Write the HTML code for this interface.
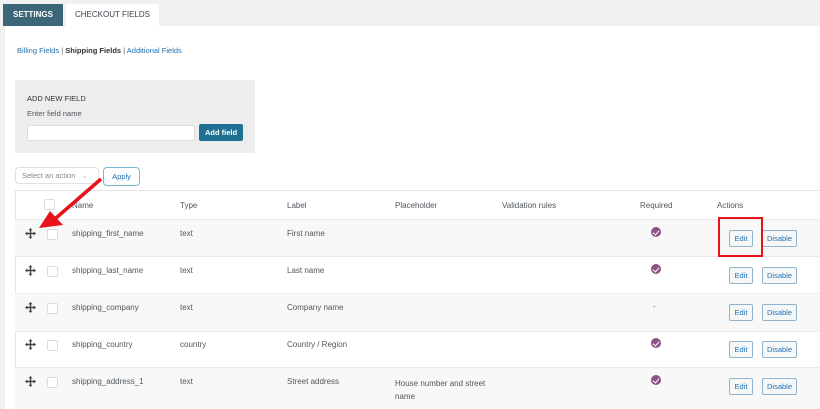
<!DOCTYPE html>
<html><head><style>
*{margin:0;padding:0;box-sizing:border-box}
body{width:820px;height:409px;overflow:hidden;background:#f1f1f1;font-family:"Liberation Sans",sans-serif;position:relative;color:#3c434a}
.a{position:absolute}
.t{font-size:8px;color:#50575e}
.row{position:absolute;left:15px;width:805px;border-top:1px solid #ececec}
.s{background:#f8f8f8}
.cb{position:absolute;width:11px;height:11px;border:1px solid #dcdcdc;border-radius:2px;background:#fff}
.btn{position:absolute;height:17px;border:1px solid #8fb3cf;border-radius:2px;background:#f6f7f7;color:#2271b1;font-size:7.5px;text-align:center;line-height:15px}
.chk{position:absolute;width:10px;height:10px;border-radius:50%;background:#8c5383}
.chk:after{content:"";position:absolute;left:3px;top:2px;width:3px;height:5px;border:solid #fff;border-width:0 1.5px 1.5px 0;transform:rotate(40deg)}
.mv{position:absolute;width:11px;height:11px}
</style></head><body>
<svg width="0" height="0" style="position:absolute"><defs><symbol id="mv" viewBox="0 0 11 11"><path d="M5.5 1.5V9.5M1.5 5.5H9.5" stroke="#3c434a" stroke-width="1.4"/><path d="M5.5 0L3.5 2.3H7.5ZM5.5 11L3.5 8.7H7.5ZM0 5.5L2.3 3.5V7.5ZM11 5.5L8.7 3.5V7.5Z" fill="#3c434a"/></symbol></defs></svg>
<div class="a" style="left:3px;top:4px;width:60px;height:22px;background:#3b6778;color:#fff;font-size:8px;font-weight:bold;line-height:22px;text-align:center">SETTINGS</div>
<div class="a" style="left:66px;top:4px;width:93px;height:22px;background:#fff;color:#3c434a;font-size:8px;line-height:22px;text-align:center">CHECKOUT FIELDS</div>
<div class="a" style="left:5px;top:26px;width:815px;height:383px;background:#fff"></div>
<div class="a t" style="left:17px;top:46px;font-size:7.5px"><span style="color:#2271b1">Billing Fields</span> | <b style="color:#333;font-weight:600">Shipping Fields</b> | <span style="color:#2271b1">Additional Fields</span></div>
<div class="a" style="left:15px;top:80px;width:240px;height:73px;background:#ededed"></div>
<div class="a" style="left:27px;top:94px;font-size:7.5px;color:#333">ADD NEW FIELD</div>
<div class="a" style="left:27px;top:109px;font-size:7.5px;color:#50575e">Enter field name</div>
<div class="a" style="left:27px;top:125px;width:168px;height:16px;background:#fff;border:1px solid #ddd;border-radius:2px"></div>
<div class="a" style="left:199px;top:124px;width:44px;height:17px;background:#1f7194;color:#fff;font-size:7.5px;font-weight:bold;line-height:17px;text-align:center;border-radius:2px">Add field</div>
<div class="a" style="left:15px;top:167px;width:84px;height:17px;border:1px solid #e0e0e0;border-radius:4px;background:#fff;font-size:7.5px;color:#888;line-height:15px;padding-left:6px">Select an action <span style="color:#bbb;margin-left:4px">⌄</span></div>
<div class="a" style="left:103px;top:167px;width:37px;height:19px;border:1px solid #78b9d4;border-radius:4px;background:#fff;font-size:7.5px;color:#2271b1;line-height:17px;text-align:center">Apply</div>
<div class="a" style="left:15px;top:190px;width:805px;height:219px;border-left:1px solid #e5e5e5;border-top:1px solid #e5e5e5"></div>
<div class="cb" style="left:44px;top:199px"></div>
<div class="a t" style="left:72px;top:201px">Name</div>
<div class="a t" style="left:180px;top:201px">Type</div>
<div class="a t" style="left:287px;top:201px">Label</div>
<div class="a t" style="left:395px;top:201px">Placeholder</div>
<div class="a t" style="left:502px;top:201px">Validation rules</div>
<div class="a t" style="left:640px;top:201px">Required</div>
<div class="a t" style="left:717px;top:201px">Actions</div>

<div class="row s" style="top:219px;height:37px"></div>
<div class="row" style="top:256px;height:37px"></div>
<div class="row s" style="top:293px;height:38px"></div>
<div class="row" style="top:331px;height:36px"></div>
<div class="row s" style="top:367px;height:42px"></div>

<svg class="mv" style="left:25px;top:228px"><use href="#mv"/></svg><div class="cb" style="left:47px;top:229px"></div>
<div class="a t" style="left:72px;top:229px">shipping_first_name</div><div class="a t" style="left:180px;top:229px">text</div><div class="a t" style="left:287px;top:229px">First name</div>
<div class="chk" style="left:651px;top:227px"></div>
<div class="btn" style="left:729px;top:230px;width:24px">Edit</div><div class="btn" style="left:762px;top:230px;width:35px">Disable</div>

<svg class="mv" style="left:25px;top:265px"><use href="#mv"/></svg><div class="cb" style="left:47px;top:266px"></div>
<div class="a t" style="left:72px;top:266px">shipping_last_name</div><div class="a t" style="left:180px;top:266px">text</div><div class="a t" style="left:287px;top:266px">Last name</div>
<div class="chk" style="left:651px;top:264px"></div>
<div class="btn" style="left:729px;top:267px;width:24px">Edit</div><div class="btn" style="left:762px;top:267px;width:35px">Disable</div>

<svg class="mv" style="left:25px;top:302px"><use href="#mv"/></svg><div class="cb" style="left:47px;top:303px"></div>
<div class="a t" style="left:72px;top:303px">shipping_company</div><div class="a t" style="left:180px;top:303px">text</div><div class="a t" style="left:287px;top:303px">Company name</div>
<div class="a t" style="left:653px;top:302px">-</div>
<div class="btn" style="left:729px;top:304px;width:24px">Edit</div><div class="btn" style="left:762px;top:304px;width:35px">Disable</div>

<svg class="mv" style="left:25px;top:339px"><use href="#mv"/></svg><div class="cb" style="left:47px;top:340px"></div>
<div class="a t" style="left:72px;top:340px">shipping_country</div><div class="a t" style="left:180px;top:340px">country</div><div class="a t" style="left:287px;top:340px">Country / Region</div>
<div class="chk" style="left:651px;top:338px"></div>
<div class="btn" style="left:729px;top:341px;width:24px">Edit</div><div class="btn" style="left:762px;top:341px;width:35px">Disable</div>

<svg class="mv" style="left:25px;top:376px"><use href="#mv"/></svg><div class="cb" style="left:47px;top:377px"></div>
<div class="a t" style="left:72px;top:377px">shipping_address_1</div><div class="a t" style="left:180px;top:377px">text</div><div class="a t" style="left:287px;top:377px">Street address</div>
<div class="a t" style="left:395px;top:377px;line-height:13px">House number and street<br>name</div>
<div class="chk" style="left:651px;top:375px"></div>
<div class="btn" style="left:729px;top:378px;width:24px">Edit</div><div class="btn" style="left:762px;top:378px;width:35px">Disable</div>

<div class="a" style="left:718px;top:217px;width:45px;height:40px;border:2px solid #e8121b"></div>
<svg class="a" style="left:0;top:0" width="820" height="409"><line x1="101" y1="179" x2="56" y2="218" stroke="#e8121b" stroke-width="3.5"/><polygon points="39,228 50,211 63,225" fill="#e8121b"/></svg>
</body></html>
